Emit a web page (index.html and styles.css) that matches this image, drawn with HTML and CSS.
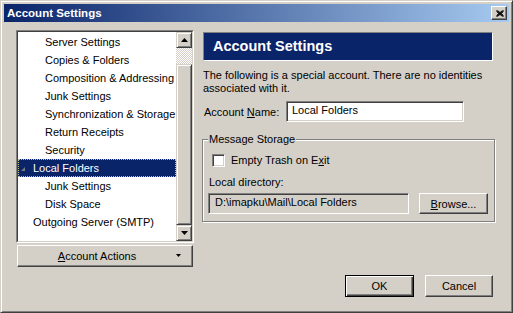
FILE: index.html
```html
<!DOCTYPE html>
<html lang="en">
<head>
    <meta charset="UTF-8">
    <title>Account Settings</title>
    <link rel="stylesheet" href="styles.css">
</head>
<body>
    <!-- Jendela dialog -->
    <div class="window">
        <div class="titlebar">
            <span class="title">Account Settings</span>
            <button class="close-btn">
                <svg width="8" height="7" viewBox="0 0 8 7"><path d="M0.5 0.5 L7.5 6.5 M1.5 0.5 L7.5 5.5 M0.5 1.5 L6.5 6.5 M7.5 0.5 L0.5 6.5 M6.5 0.5 L0.5 5.5 M7.5 1.5 L1.5 6.5" stroke="#000" stroke-width="1" fill="none"/></svg>
            </button>
        </div>

        <div class="content">
            <!-- Kolom kiri: pohon akun -->
            <div class="left-col">
                <div class="tree">
                    <div class="tree-inner">
                        <ul class="tree-list">
                            <li class="child">Server Settings</li>
                            <li class="child">Copies &amp; Folders</li>
                            <li class="child">Composition &amp; Addressing</li>
                            <li class="child">Junk Settings</li>
                            <li class="child">Synchronization &amp; Storage</li>
                            <li class="child">Return Receipts</li>
                            <li class="child">Security</li>
                            <li class="account selected"><svg class="twisty" width="13" height="18" viewBox="0 0 13 18"><polygon points="1,12 5,8 5,12" fill="#7a7a7a"/></svg>Local Folders</li>
                            <li class="child">Junk Settings</li>
                            <li class="child">Disk Space</li>
                            <li class="account">Outgoing Server (SMTP)</li>
                        </ul>
                        <div class="scrollbar">
                            <div class="sb-btn">
                                <svg width="7" height="4" viewBox="0 0 7 4"><polygon points="3.5,0 7,4 0,4" fill="#000"/></svg>
                            </div>
                            <div class="sb-track"><div class="sb-thumb"></div></div>
                            <div class="sb-btn">
                                <svg width="7" height="4" viewBox="0 0 7 4"><polygon points="0,0 7,0 3.5,4" fill="#000"/></svg>
                            </div>
                        </div>
                    </div>
                </div>
                <button class="btn actions-btn">
                    <span class="actions-label"><u>A</u>ccount Actions</span>
                    <svg class="drop-arrow" width="5" height="3" viewBox="0 0 5 3"><polygon points="0,0 5,0 2.5,3" fill="#000"/></svg>
                </button>
            </div>

            <!-- Kolom kanan: pengaturan akun -->
            <div class="right-col">
                <div class="page-header">Account Settings</div>
                <p class="desc">The following is a special account. There are no identities associated with it.</p>
                <div class="name-row">
                    <label class="name-label">Account <u>N</u>ame:</label>
                    <div class="field name-field">Local Folders</div>
                </div>
                <fieldset class="group">
                    <legend>Message Storage</legend>
                    <div class="check-row">
                        <span class="checkbox"></span>
                        <span>Empty Trash on E<u>x</u>it</span>
                    </div>
                    <div class="dir-label">Local directory:</div>
                    <div class="dir-row">
                        <div class="field readonly">D:\imapku\Mail\Local Folders</div>
                        <button class="btn browse-btn"><u>B</u>rowse...</button>
                    </div>
                </fieldset>
            </div>
        </div>

        <div class="footer">
            <button class="btn default-btn">OK</button>
            <button class="btn cancel-btn">Cancel</button>
        </div>
    </div>
</body>
</html>
```

FILE: styles.css
```css
/* Reset dasar */
* {
    margin: 0;
    padding: 0;
    box-sizing: border-box;
}

body {
    width: 513px;
    height: 313px;
    background-color: #d4d0c8;
    font-family: "Liberation Sans", Arial, sans-serif;
    font-size: 11px;
    color: #000;
    overflow: hidden;
}

/* Bingkai jendela gaya klasik */
.window {
    width: 513px;
    height: 313px;
    background-color: #d4d0c8;
    border: 1px solid;
    border-color: #d4d0c8 #404040 #404040 #d4d0c8;
    box-shadow: inset 1px 1px 0 #fff, inset -1px -1px 0 #808080;
    padding: 3px;
    display: flex;
    flex-direction: column;
}

.titlebar {
    height: 18px;
    display: flex;
    align-items: center;
    justify-content: space-between;
    padding: 0 2px 0 3px;
    background: linear-gradient(to right, #0a246a, #a6caf0);
}

.title {
    color: #fff;
    font-weight: bold;
    font-size: 11.5px;
}

.close-btn {
    width: 16px;
    height: 14px;
    display: flex;
    align-items: center;
    justify-content: center;
    background-color: #d4d0c8;
    border: 1px solid;
    border-color: #fff #404040 #404040 #fff;
    box-shadow: inset -1px -1px 0 #808080;
    padding-left: 1px;
}

.close-btn svg {
    display: block;
}

/* Area isi */
.content {
    display: flex;
    gap: 8px;
    padding: 8px 0 0 12px;
}

.left-col {
    width: 178px;
    display: flex;
    flex-direction: column;
    gap: 2px;
}

.tree {
    height: 213px;
    border: 1px solid;
    border-color: #808080 #fff #fff #808080;
}

.tree-inner {
    height: 100%;
    display: flex;
    background-color: #fff;
    border: 1px solid;
    border-color: #404040 #d4d0c8 #d4d0c8 #404040;
}

.tree-list {
    flex: 1;
    list-style: none;
    overflow: hidden;
    padding-top: 1px;
}

.tree-list li {
    height: 18px;
    line-height: 18px;
    white-space: nowrap;
    display: flex;
    align-items: center;
}

.tree-list .child {
    padding-left: 27px;
}

.tree-list .account {
    padding-left: 15px;
}

.tree-list .account.selected {
    padding-left: 2px;
}

.tree-list .selected {
    background-color: #0a246a;
    color: #fff;
    outline: 1px dotted #c8c070;
    outline-offset: -1px;
}

.twisty {
    display: block;
    flex-shrink: 0;
}

/* Scrollbar */
.scrollbar {
    width: 16px;
    display: flex;
    flex-direction: column;
}

.sb-btn {
    width: 16px;
    height: 16px;
    display: flex;
    align-items: center;
    justify-content: center;
    background-color: #d4d0c8;
    border: 1px solid;
    border-color: #d4d0c8 #404040 #404040 #d4d0c8;
    box-shadow: inset 1px 1px 0 #fff, inset -1px -1px 0 #808080;
}

.sb-btn svg {
    display: block;
}

.sb-track {
    flex: 1;
    padding-top: 16px;
    background: repeating-conic-gradient(#d4d0c8 0 25%, #fff 0 50%) 0 0 / 2px 2px;
}

.sb-thumb {
    height: 161px;
    background-color: #d4d0c8;
    border: 1px solid;
    border-color: #d4d0c8 #404040 #404040 #d4d0c8;
    box-shadow: inset 1px 1px 0 #fff, inset -1px -1px 0 #808080;
}

/* Tombol klasik */
.btn {
    font-family: "Liberation Sans", Arial, sans-serif;
    font-size: 11px;
    color: #000;
    background-color: #d4d0c8;
    border: 1px solid;
    border-color: #fff #404040 #404040 #fff;
    box-shadow: inset -1px -1px 0 #808080;
    height: 22px;
}

.actions-btn {
    width: 176px;
    margin-left: 1px;
    display: flex;
    align-items: center;
    justify-content: space-between;
    padding: 0 11px 1px 0;
}

.actions-label {
    flex: 1;
    text-align: center;
}

.drop-arrow {
    display: block;
}

/* Kolom kanan */
.right-col {
    width: 293px;
}

.page-header {
    height: 29px;
    margin: 2px 2px 0 1px;
    padding-left: 9px;
    line-height: 27px;
    background-color: #0a246a;
    border: 1px solid;
    border-color: #808080 #fff #fff #808080;
    color: #fff;
    font-weight: bold;
    font-size: 14.5px;
}

.desc {
    margin-top: 8px;
    padding-left: 1px;
    line-height: 13px;
}

.name-row {
    display: flex;
    align-items: center;
    margin-top: 6px;
}

.name-label {
    width: 84px;
    padding-left: 2px;
}

.field {
    height: 21px;
    line-height: 17px;
    padding-left: 5px;
    background-color: #fff;
    border: 1px solid;
    border-color: #808080 #fff #fff #808080;
    box-shadow: inset 1px 1px 0 #404040, inset -1px -1px 0 #d4d0c8;
    white-space: nowrap;
}

.name-field {
    width: 178px;
}

.field.readonly {
    width: 201px;
    background-color: #d4d0c8;
    padding-left: 6px;
}

/* Kotak grup */
.group {
    margin-top: 11px;
    border: 1px solid #808080;
    box-shadow: inset 1px 1px 0 #fff, 1px 1px 0 #fff;
    padding: 0 5px 7px 5px;
}

.group legend {
    padding: 0 1px;
    background-color: #d4d0c8;
    line-height: 13px;
}

.check-row {
    display: flex;
    align-items: center;
    gap: 6px;
    height: 18px;
    margin: 5px 0 0 4px;
}

.checkbox {
    width: 13px;
    height: 13px;
    background-color: #fff;
    border: 1px solid;
    border-color: #808080 #fff #fff #808080;
    box-shadow: inset 1px 1px 0 #404040, inset -1px -1px 0 #d4d0c8;
}

.dir-label {
    margin-top: 7px;
    padding-left: 1px;
    line-height: 13px;
}

.dir-row {
    display: flex;
    gap: 10px;
    margin-top: 4px;
}

.browse-btn {
    width: 69px;
    height: 21px;
}

/* Tombol bawah */
.footer {
    display: flex;
    justify-content: flex-end;
    gap: 11px;
    margin-top: 8px;
    padding-right: 16px;
}

.default-btn {
    width: 69px;
    border-color: #000;
    box-shadow: inset 1px 1px 0 #fff, inset -1px -1px 0 #404040, inset -2px -2px 0 #808080;
}

.cancel-btn {
    width: 68px;
}
```
